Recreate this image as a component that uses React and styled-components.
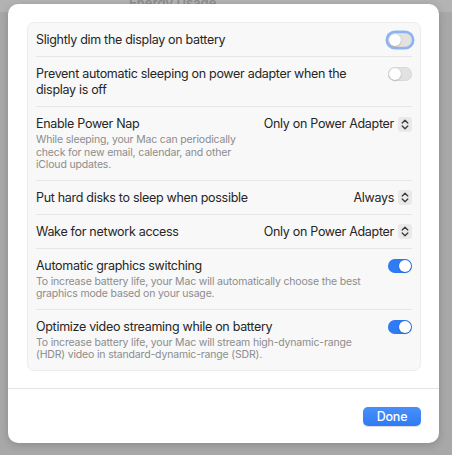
import React from 'react';
import styled, { createGlobalStyle } from 'styled-components';

const GlobalStyle = createGlobalStyle`
  html, body {
    margin: 0;
    padding: 0;
    width: 452px;
    height: 455px;
    overflow: hidden;
    background: #a7a7a7;
    font-family: Inter, "Noto Sans", sans-serif;
    -webkit-font-smoothing: antialiased;
  }
`;

const rows = [
  { title: 'Slightly dim the display on battery', control: 'toggle', on: false, focus: true },
  { title: 'Prevent automatic sleeping on power adapter when the display is off', control: 'toggle', on: false },
  {
    title: 'Enable Power Nap',
    desc: 'While sleeping, your Mac can periodically check for new email, calendar, and other iCloud updates.',
    control: 'popup',
    value: 'Only on Power Adapter',
    descWidth: 205,
  },
  { title: 'Put hard disks to sleep when possible', control: 'popup', value: 'Always' },
  { title: 'Wake for network access', control: 'popup', value: 'Only on Power Adapter' },
  {
    title: 'Automatic graphics switching',
    desc: 'To increase battery life, your Mac will automatically choose the best graphics mode based on your usage.',
    control: 'toggle',
    on: true,
  },
  {
    title: 'Optimize video streaming while on battery',
    desc: 'To increase battery life, your Mac will stream high-dynamic-range (HDR) video in standard-dynamic-range (SDR).',
    control: 'toggle',
    on: true,
  },
];

const App = () => {
  return (
    <>
      <GlobalStyle />
      <Backdrop>
        <BackTitle>Energy Usage</BackTitle>
        <Sheet>
          <Body>
            <Group>
              {rows.map((row, i) => (
                <Row key={i}>
                  <Text>
                    <Title>{row.title}</Title>
                    {row.desc && <Desc $width={row.descWidth}>{row.desc}</Desc>}
                  </Text>
                  {row.control === 'toggle' ? (
                    <Toggle $on={row.on} $focus={row.focus}>
                      <Knob $on={row.on} />
                    </Toggle>
                  ) : (
                    <Popup>
                      {row.value}
                      <Stepper>
                        <svg width="8" height="11" viewBox="0 0 8 11">
                          <path
                            d="M1.2 4 L4 1.3 L6.8 4 M1.2 7 L4 9.7 L6.8 7"
                            fill="none"
                            stroke="#3a3a3a"
                            strokeWidth="1.3"
                            strokeLinecap="round"
                            strokeLinejoin="round"
                          />
                        </svg>
                      </Stepper>
                    </Popup>
                  )}
                </Row>
              ))}
            </Group>
          </Body>
          <Footer>
            <DoneButton>Done</DoneButton>
          </Footer>
        </Sheet>
      </Backdrop>
    </>
  );
};

export default App;

const Backdrop = styled.div`
  position: relative;
  width: 452px;
  height: 455px;
  background: linear-gradient(to bottom, #b3b3b3 0, #b3b3b3 12px, #a8a8a8 12px);
`;

const BackTitle = styled.div`
  position: absolute;
  left: 129px;
  top: -5px;
  font-size: 13px;
  font-weight: 600;
  color: #8e8e8e;
`;

const Sheet = styled.div`
  position: absolute;
  left: 8px;
  top: 4px;
  width: 431px;
  height: 439px;
  background: #ffffff;
  border-radius: 10px;
  box-shadow: 0 2px 8px rgba(0, 0, 0, 0.18);
  display: flex;
  flex-direction: column;
`;

const Body = styled.div`
  padding: 18px 18px 0 19px;
  height: 385px;
  box-sizing: border-box;
  border-bottom: 1px solid #e4e4e4;
`;

const Group = styled.div`
  background: #f8f8f8;
  border: 1px solid #ececec;
  border-radius: 7px;
  padding: 0 8px 0 8px;
`;

const Row = styled.div`
  display: flex;
  justify-content: space-between;
  align-items: flex-start;
  padding: 9px 0 8px 0;
  border-top: 1px solid #e6e6e6;

  &:first-child {
    border-top: none;
  }
`;

const Text = styled.div`
  display: flex;
  flex-direction: column;
  gap: 2px;
  max-width: 340px;
`;

const Title = styled.div`
  font-size: 12.5px;
  line-height: 16px;
  letter-spacing: -0.3px;
  color: #262626;
`;

const Desc = styled.div`
  font-size: 10.5px;
  line-height: 12.5px;
  letter-spacing: -0.17px;
  color: #8c8c8c;
  max-width: ${(p) => (p.$width ? `${p.$width}px` : 'none')};
`;

const Toggle = styled.div`
  position: relative;
  flex-shrink: 0;
  width: 24px;
  height: 14px;
  margin-top: 1px;
  border-radius: 8px;
  background: ${(p) => (p.$on ? '#2f7bf5' : '#e2e2e2')};
  box-shadow: ${(p) =>
    p.$focus ? '0 0 0 2.5px #8db3f3, inset 0 0 0 0.5px rgba(0,0,0,0.08)' : 'inset 0 0 0 0.5px rgba(0,0,0,0.08)'};
`;

const Knob = styled.div`
  position: absolute;
  top: 1px;
  left: ${(p) => (p.$on ? '11px' : '1px')};
  width: 12px;
  height: 12px;
  border-radius: 50%;
  background: #ffffff;
  box-shadow: 0 0.5px 1.5px rgba(0, 0, 0, 0.3);
`;

const Popup = styled.div`
  display: flex;
  align-items: center;
  gap: 4px;
  font-size: 12.5px;
  line-height: 16px;
  letter-spacing: -0.3px;
  color: #262626;
  flex-shrink: 0;
`;

const Stepper = styled.div`
  display: flex;
  align-items: center;
  justify-content: center;
  width: 14px;
  height: 15px;
  border-radius: 3px;
  background: #e9e9e9;
`;

const Footer = styled.div`
  flex: 1;
  display: flex;
  justify-content: flex-end;
  align-items: flex-start;
  padding: 18px 18px 0 0;
`;

const DoneButton = styled.button`
  width: 58px;
  height: 19px;
  border: none;
  border-radius: 5px;
  background: linear-gradient(to bottom, #4890f8, #2f7bf5);
  color: #ffffff;
  font-family: Inter, sans-serif;
  font-size: 12.5px;
  font-weight: 500;
  letter-spacing: -0.2px;
  padding: 0;
  box-shadow: 0 0.5px 1px rgba(0, 0, 0, 0.15);
`;
